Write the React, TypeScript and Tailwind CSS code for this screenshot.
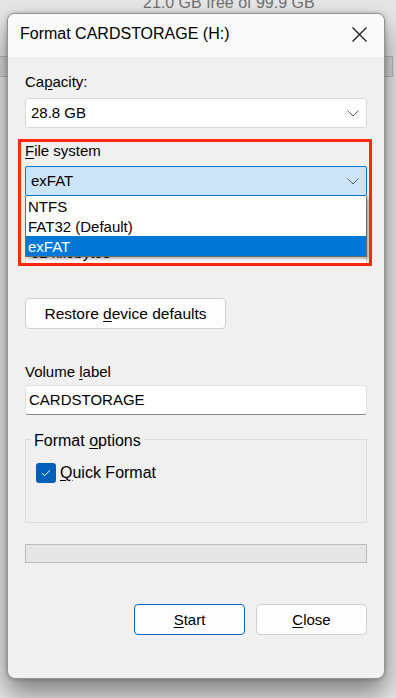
import React from "react";

function Chevron() {
  return (
    <svg width="12" height="7" viewBox="0 0 12 7" fill="none">
      <path d="M0.5 0.5L6 6L11.5 0.5" stroke="#5c5c5c" strokeWidth="1" />
    </svg>
  );
}

function Combo({ value, focused, low }: { value: string; focused?: boolean; low?: boolean }) {
  return (
    <div
      className={
        focused
          ? "flex h-[30px] items-center justify-between rounded-[2px] border border-[#0078d4] bg-[#cce4f7] pl-[5px] pr-[7px]"
          : "flex h-[30px] items-center justify-between rounded-[3px] border border-[#d9d9d9] bg-white pl-[5px] pr-[7px]"
      }
    >
      <span className={low ? "pt-[7px]" : ""}>{value}</span>
      <Chevron />
    </div>
  );
}

export default function App() {
  return (
    <div className="relative h-[698px] w-[396px] overflow-hidden bg-[#e6e6e6] pl-[7px] pt-[13px] font-['Liberation_Sans',Arial,sans-serif] text-[15px] text-black">
      {/* window behind the dialog */}
      <div className="absolute left-[143px] top-[-7px] text-[16px] leading-[20px] text-[#707070]">
        21.0 GB free of 99.9 GB
      </div>
      <div className="absolute left-[-2px] top-[56px] h-[21px] w-[395px] border border-[#b5b5b5] bg-[#d6d6d6]" />

      {/* Format dialog */}
      <div className="relative flex h-[666px] w-[378px] flex-col overflow-hidden rounded-[8px] border border-[#939393] bg-[#f0f0f0] shadow-[0_14px_26px_rgba(0,0,0,0.45),0_0_4px_rgba(0,0,0,0.25)]">
        {/* Title bar */}
        <div className="flex h-[43px] shrink-0 items-start justify-between bg-[#fafafa] pl-[12px] pr-[17px]">
          <span className="pt-[10px] text-[16px] leading-[20px]">Format CARDSTORAGE (H:)</span>
          <svg className="mt-[13px]" width="15" height="15" viewBox="0 0 15 15" fill="none">
            <path d="M0.5 0.5L14.5 14.5M14.5 0.5L0.5 14.5" stroke="#1a1a1a" strokeWidth="1.3" />
          </svg>
        </div>

        {/* Body */}
        <div className="px-[17px] pt-[15px]">
          <div className="h-[20px] leading-[20px]">
            Ca<u className="underline-offset-2">p</u>acity:
          </div>
          <div className="mt-[6px]">
            <Combo value="28.8 GB" />
          </div>

          <div className="relative mt-[13px]">
            <div className="h-[20px] leading-[20px]">
              <u className="underline-offset-2">F</u>ile system
            </div>
            <div className="relative mt-[5px]">
              <Combo value="exFAT" focused />
              <div className="absolute left-0 right-0 top-full z-10 border border-t-0 border-[#6b6b6b] bg-white shadow-[2px_2px_3px_rgba(0,0,0,0.3)]">
                <div className="h-[20px] pl-[2px] leading-[22px]">NTFS</div>
                <div className="h-[20px] pl-[2px] leading-[22px]">FAT32 (Default)</div>
                <div className="h-[20px] bg-[#0078d7] pl-[2px] leading-[21px] text-white">exFAT</div>
              </div>
            </div>
            <div className="mt-[14px] h-[20px] leading-[20px]">
              <u className="underline-offset-2">A</u>llocation unit size
            </div>
            <div className="mt-[5px]">
              <Combo value="32 kilobytes" low />
            </div>
            <div className="pointer-events-none absolute -bottom-[1px] -left-[7px] -right-[5px] -top-[2px] z-20 border-[3px] border-[#ff2a0e]" />
          </div>

          <button className="mt-[33px] block h-[31px] w-[201px] rounded-[4px] border border-[#d0d0d0] bg-[#fdfdfd] text-[15.5px] leading-[20px]">
            Restore <u className="underline-offset-2">d</u>evice defaults
          </button>

          <div className="mt-[33px] h-[20px] leading-[20px]">
            Volume <u className="underline-offset-2">l</u>abel
          </div>
          <div className="mt-[3px] flex h-[30px] items-center rounded-[3px] border border-[#e2e2e2] border-b-[#8a8a8a] bg-white pl-[3px]">
            CARDSTORAGE
          </div>

          <div className="relative mt-[24px] h-[84px] border border-[#dcdcdc]">
            <span className="absolute -top-[7px] left-[5px] bg-[#f0f0f0] px-[3px] text-[16px] leading-[16px]">
              Format <u className="underline-offset-2">o</u>ptions
            </span>
            <div className="flex items-center pl-[10px] pt-[23px]">
              <div className="flex h-[20px] w-[20px] items-center justify-center rounded-[3px] bg-[#005fb8]">
                <svg width="20" height="20" viewBox="0 0 20 20" fill="none">
                  <path d="M6 10.2L8.6 12.6L14 7.4" stroke="white" strokeWidth="1" />
                </svg>
              </div>
              <span className="ml-[4px] text-[16px] leading-[20px]">
                <u className="underline-offset-2">Q</u>uick Format
              </span>
            </div>
          </div>

          <div className="mt-[21px] h-[19px] border border-[#bcbcbc] bg-[#e6e6e6]" />

          <div className="mt-[41px] flex justify-end gap-[11px]">
            <button className="h-[31px] w-[111px] rounded-[4px] border border-[#0067c0] bg-[#fdfdfd] leading-[20px]">
              <u className="underline-offset-2">S</u>tart
            </button>
            <button className="h-[31px] w-[111px] rounded-[4px] border border-[#d0d0d0] bg-[#fdfdfd] leading-[20px]">
              <u className="underline-offset-2">C</u>lose
            </button>
          </div>
        </div>
      </div>
    </div>
  );
}
